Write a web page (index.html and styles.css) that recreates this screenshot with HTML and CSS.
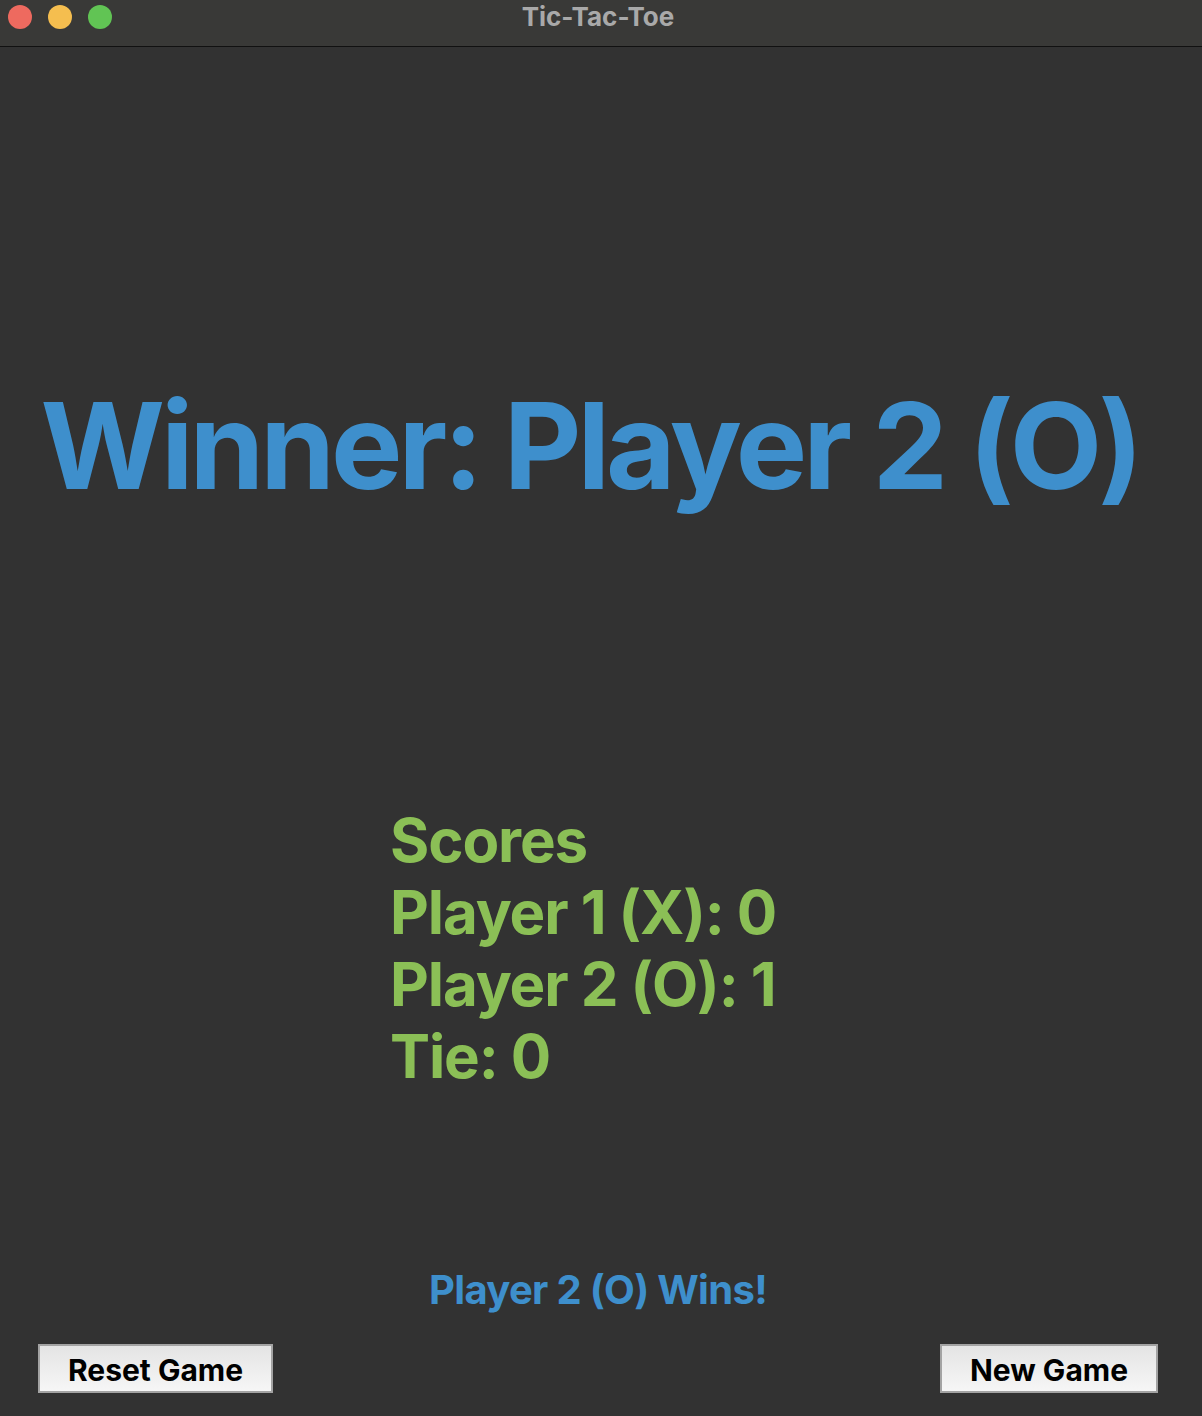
FILE: index.html
```html
<!DOCTYPE html>
<html>
<head>
<meta charset="utf-8">
<title>Tic-Tac-Toe</title>
<link rel="stylesheet" href="styles.css">
</head>
<body>
<div class="window">
  <header class="titlebar">
    <div class="lights">
      <span class="light red"></span>
      <span class="light yellow"></span>
      <span class="light green"></span>
    </div>
    <div class="title">Tic-Tac-Toe</div>
  </header>
  <main class="content">
    <h1 class="winner">Winner: Player 2 (O)</h1>
    <div class="scores">
      <div class="score-line">Scores</div>
      <div class="score-line">Player 1 (X): 0</div>
      <div class="score-line">Player 2 (O): 1</div>
      <div class="score-line">Tie: 0</div>
    </div>
    <div class="status">Player 2 (O) Wins!</div>
    <div class="buttons">
      <button class="btn btn-reset">Reset Game</button>
      <button class="btn btn-new">New Game</button>
    </div>
  </main>
</div>
</body>
</html>
```
FILE: styles.css
```css
* { box-sizing: border-box; }
html, body {
  margin: 0;
  padding: 0;
  background: #323232;
}
body {
  font-family: Inter, "Liberation Sans", sans-serif;
}
.window {
  width: 1202px;
  height: 1416px;
  display: flex;
  flex-direction: column;
  background: #323232;
}
.titlebar {
  position: relative;
  height: 47px;
  flex: none;
  background: #393937;
  border-bottom: 1px solid #111;
  display: flex;
  align-items: center;
  justify-content: center;
}
.lights {
  position: absolute;
  left: 8px;
  top: 5px;
  display: flex;
  gap: 16px;
}
.light {
  width: 24px;
  height: 24px;
  border-radius: 50%;
  display: block;
}
.red { background: #ee6a5f; }
.yellow { background: #f5be4f; }
.green { background: #61c454; }
.title {
  color: #a9a9a9;
  font-weight: 700;
  font-size: 26px;
  line-height: 32px;
  margin-top: -12px;
  padding-right: 6px;
}
.content {
  flex: 1;
  display: flex;
  flex-direction: column;
}
.winner {
  margin: 327px 0 0 0;
  padding-right: 22px;
  text-align: center;
  font-size: 120px;
  line-height: 144px;
  font-weight: 700;
  color: #3e8fcc;
  letter-spacing: -4px;
}
.scores {
  margin: 286px 0 0 390px;
  color: #8bbf56;
  font-weight: 700;
  font-size: 60px;
  line-height: 72px;
  letter-spacing: -1.1px;
}
.status {
  margin-top: 174px;
  padding-right: 6px;
  text-align: center;
  color: #3e8fcc;
  font-weight: 700;
  font-size: 40px;
  line-height: 48px;
  letter-spacing: -0.7px;
}
.buttons {
  margin-top: 30px;
  display: flex;
  justify-content: space-between;
  padding: 0 44px 0 38px;
}
.btn {
  height: 49px;
  border: 2px solid #a3a3a3;
  background: linear-gradient(#e4e4e4, #f6f6f6);
  color: #000;
  font-family: Inter, "Liberation Sans", sans-serif;
  font-weight: 700;
  font-size: 30px;
  padding: 2px 0 0 0;
}
.btn-reset { width: 235px; }
.btn-new { width: 218px; }
```
